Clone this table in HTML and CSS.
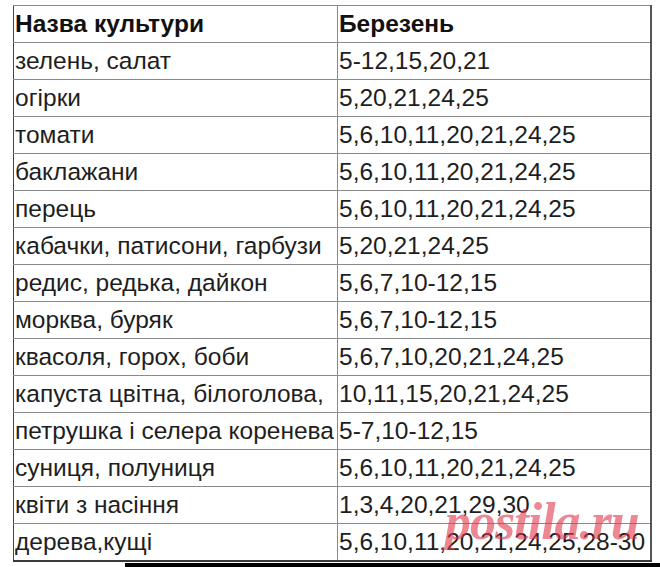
FILE: index.html
```html
<!DOCTYPE html>
<html lang="uk">
<head>
<meta charset="utf-8">
<title>Березень</title>
<link rel="stylesheet" href="styles.css">
</head>
<body>
<div class="page">
  <table class="calendar">
    <colgroup><col class="c1"><col class="c2"></colgroup>
    <thead>
      <tr><th>Назва культури</th><th>Березень</th></tr>
    </thead>
    <tbody>
      <tr><td>зелень, салат</td><td>5-12,15,20,21</td></tr>
      <tr><td>огірки</td><td>5,20,21,24,25</td></tr>
      <tr><td>томати</td><td>5,6,10,11,20,21,24,25</td></tr>
      <tr><td>баклажани</td><td>5,6,10,11,20,21,24,25</td></tr>
      <tr><td>перець</td><td>5,6,10,11,20,21,24,25</td></tr>
      <tr><td>кабачки, патисони, гарбузи</td><td>5,20,21,24,25</td></tr>
      <tr><td>редис, редька, дайкон</td><td>5,6,7,10-12,15</td></tr>
      <tr><td>морква, буряк</td><td>5,6,7,10-12,15</td></tr>
      <tr><td>квасоля, горох, боби</td><td>5,6,7,10,20,21,24,25</td></tr>
      <tr><td>капуста цвітна, білоголова,</td><td>10,11,15,20,21,24,25</td></tr>
      <tr><td>петрушка і селера коренева</td><td>5-7,10-12,15</td></tr>
      <tr><td>суниця, полуниця</td><td>5,6,10,11,20,21,24,25</td></tr>
      <tr><td>квіти з насіння</td><td>1,3,4,20,21,29,30</td></tr>
      <tr><td>дерева,кущі</td><td>5,6,10,11,20,21,24,25,28-30</td></tr>
    </tbody>
  </table>
  <div class="bottom-bar"></div>
  <div class="watermark">postila.ru</div>
</div>
</body>
</html>
```

FILE: styles.css
```css
html, body {
  margin: 0;
  padding: 0;
  background: #ffffff;
}

.page {
  position: relative;
  width: 660px;
  height: 567px;
  overflow: hidden;
  padding-top: 5px;
  box-sizing: border-box;
}

.calendar {
  margin-left: 13px;
  width: 637px;
  table-layout: fixed;
  border-collapse: collapse;
  font-family: "Liberation Sans", Arial, sans-serif;
  font-size: 24.5px;
  color: #1e1e1e;
  border-top: 1px solid #6a6a6a;
  border-left: 1px solid #444;
  border-bottom: 2px solid #3a3a3a;
  border-right: 2px solid #555;
}

.c1 { width: 324px; }
.c2 { width: 313px; }

.calendar th,
.calendar td {
  height: 36px;
  padding: 0 0 0 1px;
  border: 1px solid #8a8a8a;
  text-align: left;
  vertical-align: middle;
  white-space: nowrap;
  overflow: visible;
  line-height: 28px;
}

.calendar th {
  font-weight: bold;
  color: #111;
}

.calendar tr > :first-child {
  border-left: 1px solid #444;
}

.bottom-bar {
  margin-left: 125px;
  margin-top: 1px;
  height: 6px;
  background: #000;
}

.watermark {
  position: absolute;
  left: 445px;
  top: 496px;
  font-family: "Liberation Serif", "Times New Roman", serif;
  font-style: italic;
  font-weight: bold;
  font-size: 52px;
  letter-spacing: -1px;
  color: rgba(225, 55, 75, 0.6);
  line-height: 1;
}
```
